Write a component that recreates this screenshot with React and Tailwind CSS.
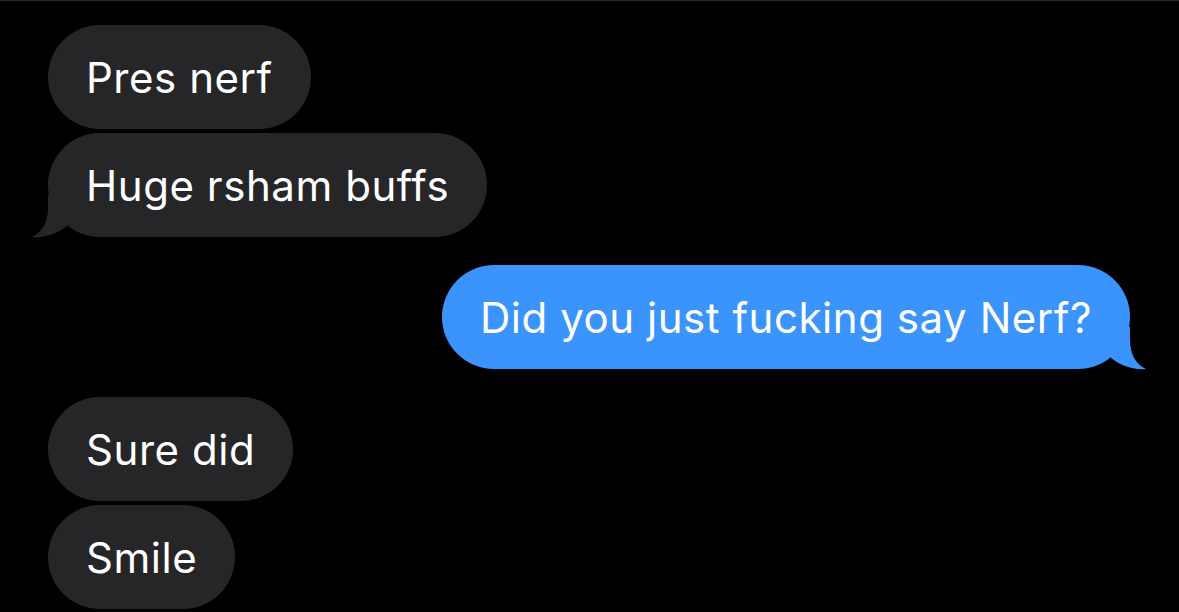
const font = { fontFamily: "Inter, 'Noto Sans', sans-serif" };

function Tail({ side, color }) {
  // little curled tail at the bottom corner of the last bubble in a group
  const pos = side === "left" ? "-left-[18px]" : "-right-[18px] -scale-x-100";
  return (
    <svg
      className={`absolute top-[62px] ${pos}`}
      width="40"
      height="45"
      viewBox="0 0 40 45"
    >
      <path
        d="M18 0 L18 12 C18 28 12 37 2 42 C15 43.5 28 38 37 31 L40 0 Z"
        fill={color}
      />
    </svg>
  );
}

function Bubble({ text, tail, me }) {
  const color = me ? "#3a94fc" : "#262629";
  return (
    <div
      className={`relative h-[104px] rounded-full px-[38px] flex items-center text-white text-[42px] tracking-[0.55px] ${
        me ? "self-end mr-[49px] bg-[#3a94fc]" : "self-start bg-[#262629]"
      }`}
      style={font}
    >
      {tail && <Tail side={me ? "right" : "left"} color={color} />}
      <span className="relative">{text}</span>
    </div>
  );
}

export default function App() {
  return (
    <div className="w-full h-[612px] bg-black border-t border-[#2a2a2a] overflow-hidden">
      <div className="flex flex-col pl-[48px] pt-[24px]">
        <div className="flex flex-col gap-[4px]">
          <Bubble text="Pres nerf" />
          <Bubble text="Huge rsham buffs" tail />
        </div>
        <div className="flex flex-col mt-[28px]">
          <Bubble text="Did you just fucking say Nerf?" me tail />
        </div>
        <div className="flex flex-col gap-[4px] mt-[28px]">
          <Bubble text="Sure did" />
          <Bubble text="Smile" />
        </div>
      </div>
    </div>
  );
}
